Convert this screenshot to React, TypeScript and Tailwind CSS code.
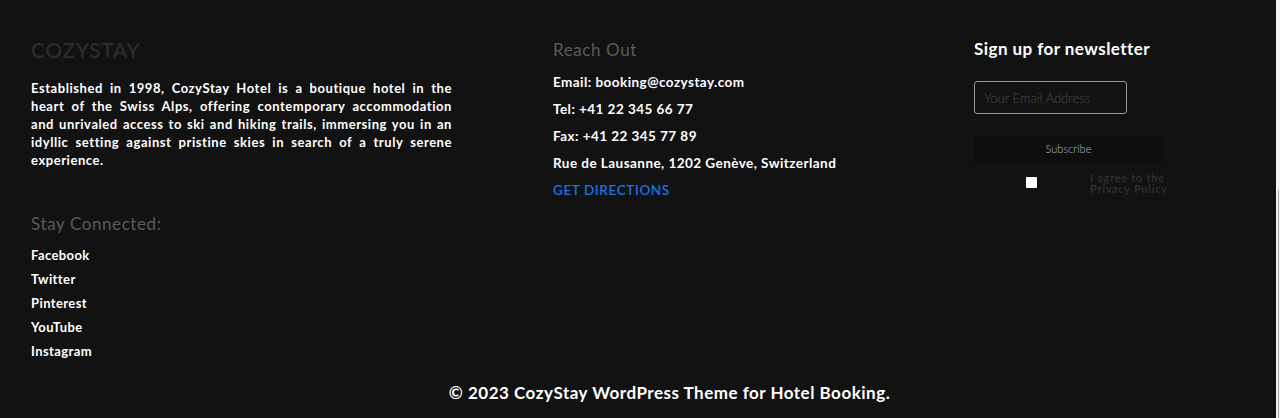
export default function App() {
    return (
        <div className="flex h-[418px] bg-[#121212] font-['Lato',sans-serif] text-white overflow-hidden">
            <div className="flex flex-1 flex-col">
                <div className="flex flex-1 pl-[31px] pt-[38px]">
                    {/* brand + social */}
                    <div className="w-[421px]">
                        <h2 className="text-[21px] leading-[24px] font-semibold tracking-[0.6px] text-[#2c2c2c]">COZYSTAY</h2>
                        <p className="mt-[17px] text-[13px] leading-[18px] font-bold tracking-[0.55px] text-justify">
                            Established in 1998, CozyStay Hotel is a boutique hotel in the heart of the Swiss Alps, offering contemporary accommodation and unrivaled access to ski and hiking trails, immersing you in an idyllic setting against pristine skies in search of a truly serene experience.
                        </p>
                        <h3 className="mt-[44px] text-[17px] leading-[22px] text-[#5a5a5a] tracking-[0.6px]">Stay Connected:</h3>
                        <ul className="mt-[11px] flex flex-col gap-[6px] text-[13px] leading-[18px] font-bold tracking-[0.4px]">
                            <li>Facebook</li>
                            <li>Twitter</li>
                            <li>Pinterest</li>
                            <li>YouTube</li>
                            <li>Instagram</li>
                        </ul>
                    </div>

                    {/* contact */}
                    <div className="ml-[101px] w-[421px] pt-[1px]">
                        <h3 className="text-[17px] leading-[22px] text-[#5a5a5a] tracking-[0.6px]">Reach Out</h3>
                        <ul className="mt-[12px] flex flex-col gap-[9px] text-[13.5px] leading-[18px] font-bold tracking-[0.45px]">
                            <li>Email: booking@cozystay.com</li>
                            <li>Tel: +41 22 345 66 77</li>
                            <li>Fax: +41 22 345 77 89</li>
                            <li>Rue de Lausanne, 1202 Genève, Switzerland</li>
                            <li className="text-[#1a73e8] font-semibold tracking-[0.6px]">GET DIRECTIONS</li>
                        </ul>
                    </div>

                    {/* newsletter */}
                    <div className="w-[200px]">
                        <h3 className="text-[17px] leading-[22px] font-bold tracking-[0.45px]">Sign up for newsletter</h3>
                        <input
                            type="email"
                            placeholder="Your Email Address"
                            className="mt-[21px] w-[153px] h-[33px] px-[9px] bg-transparent border border-[#9a9a9a] rounded-[3px] text-[13px] font-light placeholder:text-[#4a4a4a] focus:outline-none"
                        />
                        <button className="mt-[23px] block w-[189px] h-[25px] bg-[#0e0e0e] text-[11px] text-[#b4b6c4] font-light">
                            Subscribe
                        </button>
                        <label className="mt-[10px] flex items-start">
                            <input type="checkbox" className="ml-[52px] mt-[5px] w-[11px] h-[11px] appearance-none bg-white rounded-[1px]" />
                            <span className="ml-[53px] text-[11px] leading-[11px] font-bold tracking-[0.7px] text-[#2e2e2e]">
                                I agree to the<br />Privacy Policy
                            </span>
                        </label>
                    </div>
                </div>

                <div className="pb-[14px] pl-[67px] pr-[4px] text-center text-[17px] leading-[22px] font-bold tracking-[0.5px]">
                    © 2023 CozyStay WordPress Theme for Hotel Booking.
                </div>
            </div>
            <div className="flex w-[4px] flex-col bg-[#f1f1f1]">
                <div className="mt-[190px] ml-[2px] h-full w-[1px] bg-[#a8a8a8]" />
            </div>
        </div>
    );
}
